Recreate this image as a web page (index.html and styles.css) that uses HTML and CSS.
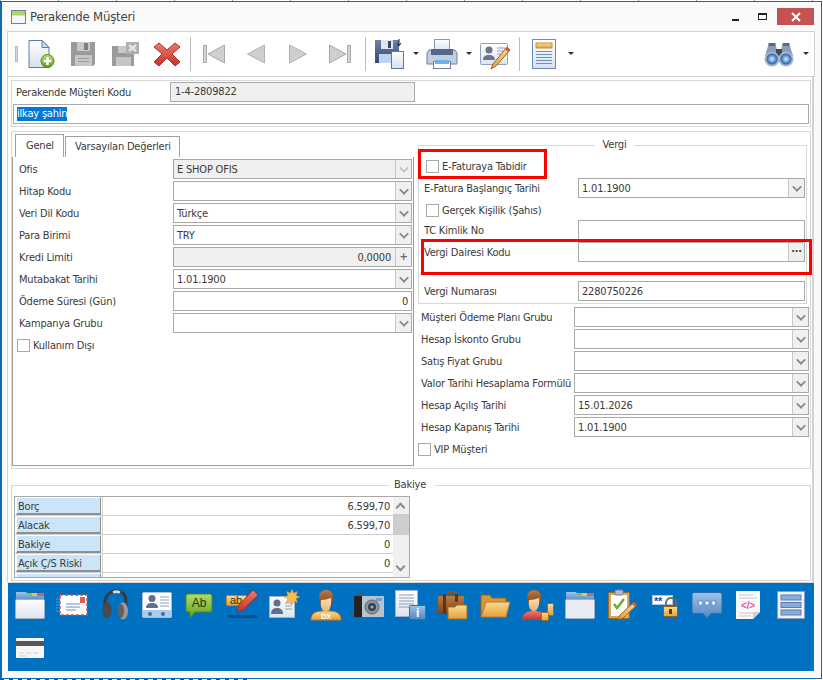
FILE: index.html
```html
<!DOCTYPE html>
<html lang="tr">
<head>
    <meta charset="UTF-8">
    <title>Perakende Müşteri</title>
    <link rel="stylesheet" href="styles.css">
</head>
<body>
    <svg class="defs" width="0" height="0">
        <defs>
            <linearGradient id="gPage" x1="0" y1="0" x2="0" y2="1"><stop offset="0" stop-color="#ffffff"/><stop offset="1" stop-color="#d5e0f0"/></linearGradient>
            <linearGradient id="gGreen" x1="0" y1="0" x2="0" y2="1"><stop offset="0" stop-color="#b5dc6a"/><stop offset="1" stop-color="#5f9e22"/></linearGradient>
            <linearGradient id="gRed" x1="0" y1="0" x2="0" y2="1"><stop offset="0" stop-color="#ee7a6c"/><stop offset="1" stop-color="#c4332a"/></linearGradient>
            <linearGradient id="gBlue" x1="0" y1="0" x2="0" y2="1"><stop offset="0" stop-color="#9cc2ea"/><stop offset="1" stop-color="#5587c2"/></linearGradient>
            <linearGradient id="gNavy" x1="0" y1="0" x2="0" y2="1"><stop offset="0" stop-color="#6c82a8"/><stop offset="1" stop-color="#34486e"/></linearGradient>
            <linearGradient id="gOrange" x1="0" y1="0" x2="0" y2="1"><stop offset="0" stop-color="#fbdc93"/><stop offset="1" stop-color="#e3a03c"/></linearGradient>
            <linearGradient id="gBrown" x1="0" y1="0" x2="0" y2="1"><stop offset="0" stop-color="#b97a45"/><stop offset="1" stop-color="#7a4318"/></linearGradient>
            <linearGradient id="gSkin" x1="0" y1="0" x2="0" y2="1"><stop offset="0" stop-color="#fde0b4"/><stop offset="1" stop-color="#eeb06c"/></linearGradient>
            <linearGradient id="gCard" x1="0" y1="0" x2="0" y2="1"><stop offset="0" stop-color="#ffffff"/><stop offset="1" stop-color="#dde3ee"/></linearGradient>
            <radialGradient id="gLens"><stop offset="0" stop-color="#dcecff"/><stop offset="0.55" stop-color="#6c9fe0"/><stop offset="1" stop-color="#2d5a9c"/></radialGradient>
        </defs>
    </svg>

    <div class="window">
        <div class="titlebar">
            <svg class="title-icon" width="15" height="14" viewBox="0 0 15 14"><rect x="0.5" y="0.5" width="14" height="13" fill="#f4f6fb" stroke="#6f7fa6"/><rect x="1" y="1" width="13" height="4.5" fill="#b3d465"/></svg>
            <span class="title-text">Perakende Müşteri</span>
            <div class="win-controls">
                <span class="win-min"></span>
                <span class="win-max"></span>
                <span class="win-close">
                    <svg width="10" height="10" viewBox="0 0 10 10"><path d="M1 1l8 8M9 1l-8 8" stroke="#fff" stroke-width="2"/></svg>
                </span>
            </div>
        </div>

        <div class="toolbar">
            <span class="grip"></span>
            <span class="tb-btn"><svg width="32" height="32" viewBox="0 0 32 32"><path d="M4 2.500h13l7 7v20H4z" fill="url(#gPage)" stroke="#5b7aa8"/><path d="M17 2.500v7h7z" fill="#cfdcee" stroke="#5b7aa8"/><circle cx="22.500" cy="23" r="6.500" fill="url(#gGreen)" stroke="#4d8a1e"/><path d="M22.500 19v8M18.500 23h8" stroke="#fff" stroke-width="2.400"/></svg></span>
            <span class="tb-btn"><svg width="32" height="32" viewBox="0 0 32 32"><path d="M4 4h24v22l-2 2H4z" fill="#9b9b9b"/><rect x="10" y="4" width="13" height="9" fill="#c9c9c9"/><rect x="17" y="5" width="4" height="7" fill="#7e7e7e"/><rect x="8" y="17" width="17" height="11" fill="#c6c6c6"/><path d="M11 20.500h11M11 23.500h11" stroke="#9b9b9b"/></svg></span>
            <span class="tb-btn"><svg width="32" height="32" viewBox="0 0 32 32"><path d="M3 8h22v20H3z" fill="#9b9b9b"/><rect x="9" y="8" width="10" height="7" fill="#c9c9c9"/><rect x="7" y="19" width="15" height="9" fill="#c6c6c6"/><rect x="17" y="4" width="13" height="12" fill="#b0b0b0"/><path d="M20 7l7 6M27 7l-7 6" stroke="#e4e4e4" stroke-width="2.400"/></svg></span>
            <span class="tb-btn"><svg width="32" height="32" viewBox="0 0 32 32"><path d="M8 5l8 7 8-7 5 4-8 7 8 8-5 4-8-8-8 8-5-4 8-8-8-7z" fill="url(#gRed)" stroke="#a83228"/></svg></span>
            <span class="tb-sep"></span>
            <span class="tb-btn"><svg width="32" height="32" viewBox="0 0 32 32"><rect x="5.500" y="7.500" width="3" height="17" fill="#d4d4d4" stroke="#a8a8a8"/><path d="M26.500 7v18L10 16z" fill="#cfcfcf" stroke="#a8a8a8"/></svg></span>
            <span class="tb-btn"><svg width="32" height="32" viewBox="0 0 32 32"><path d="M24.500 7v18L7.500 16z" fill="#cfcfcf" stroke="#b0b0b0"/></svg></span>
            <span class="tb-btn"><svg width="32" height="32" viewBox="0 0 32 32"><path d="M7.500 7v18l17-9z" fill="#cfcfcf" stroke="#b0b0b0"/></svg></span>
            <span class="tb-btn"><svg width="32" height="32" viewBox="0 0 32 32"><path d="M5.500 7v18L22 16z" fill="#cfcfcf" stroke="#a8a8a8"/><rect x="23.500" y="7.500" width="3" height="17" fill="#d4d4d4" stroke="#a8a8a8"/></svg></span>
            <span class="tb-sep tb-sep-b"></span>
            <span class="tb-btn"><svg width="32" height="32" viewBox="0 0 32 32"><path d="M2 2h24v23H2z" fill="url(#gNavy)"/><rect x="8" y="2" width="12" height="9" fill="#dfe6f1"/><rect x="15" y="3" width="3" height="7" fill="#34486e"/><rect x="6" y="16" width="16" height="9" fill="#bcd4ee"/><rect x="18.500" y="13.500" width="12" height="17" fill="url(#gPage)" stroke="#5b7aa8"/><path d="M26 1v6M24 5l2 3 2-3" fill="none" stroke="#222"/></svg></span>
            <span class="tb-drop"></span>
            <span class="tb-btn"><svg width="32" height="32" viewBox="0 0 32 32"><rect x="8.500" y="1.500" width="15" height="11" fill="url(#gCard)" stroke="#8a9ab5"/><path d="M3 12h26l2 3v11H1V15z" fill="#c3cee0" stroke="#6f80a0"/><rect x="5" y="11" width="22" height="6" fill="#56688a"/><rect x="7.500" y="23.500" width="17" height="7" fill="#fff" stroke="#6f80a0"/><rect x="9" y="22" width="14" height="4" fill="#6fb2e8"/></svg></span>
            <span class="tb-drop"></span>
            <span class="tb-btn"><svg width="32" height="32" viewBox="0 0 32 32"><rect x="1.500" y="5.500" width="27" height="21" rx="1" fill="url(#gCard)" stroke="#8fa2c0"/><circle cx="10" cy="12" r="3.500" fill="#68758d"/><path d="M4 22c0-4 3-5 6-5s6 1 6 5z" fill="#68758d"/><path d="M18 10h8M18 13h6M18 16h4" stroke="#8fa2c0"/><path d="M28 9l3 3-14 16-5 3 2-5z" fill="url(#gOrange)" stroke="#99611c"/><path d="M28 9l3 3-2 2-3-3z" fill="#d9534a"/></svg></span>
            <span class="tb-sep tb-sep-c"></span>
            <span class="tb-btn"><svg width="32" height="32" viewBox="0 0 32 32"><rect x="4.500" y="1.500" width="23" height="29" fill="url(#gPage)" stroke="#6b8ab8"/><rect x="8" y="5" width="16" height="5" fill="url(#gOrange)" stroke="#c88f2e"/><path d="M8 13.500h16M8 16.500h16M8 19.500h16M8 22.500h16M8 25.500h16" stroke="#6f8dbd"/></svg></span>
            <span class="tb-drop"></span>
            <span class="tb-btn tb-right"><svg width="32" height="32" viewBox="0 0 32 32"><path d="M5 8c1-3 7-3 8 0l2 10H2z" fill="#8a9bb5"/><path d="M19 8c1-3 7-3 8 0l3 10H17z" fill="#8a9bb5"/><path d="M5.500 5h7v3h-7zM19.500 5h7v3h-7z" fill="#5b6a80"/><rect x="13" y="11" width="6" height="8" fill="#3f4a5c"/><circle cx="9" cy="21" r="7.500" fill="#a5b4ca"/><circle cx="23" cy="21" r="7.500" fill="#a5b4ca"/><circle cx="9" cy="21" r="5.500" fill="url(#gLens)"/><circle cx="23" cy="21" r="5.500" fill="url(#gLens)"/></svg></span>
            <span class="tb-drop"></span>
        </div>

        <div class="main">
            <div class="code-box">
                <div class="code-row">
                    <label class="lbl">Perakende Müşteri Kodu</label>
                    <div class="inp inp-code disabled">1-4-2809822</div>
                </div>
                <div class="inp inp-name"><span class="selected">ilkay şahin</span></div>
            </div>

            <div class="detail-box">
                <div class="tabs-col">
                    <div class="tabs">
                        <span class="tab active">Genel</span>
                        <span class="tab">Varsayılan Değerleri</span>
                    </div>
                    <div class="tab-panel">
                        <div class="row"><label class="lbl">Ofis</label><div class="inp disabled"><span class="val">E SHOP OFIS</span><span class="drop off"></span></div></div>
                        <div class="row"><label class="lbl">Hitap Kodu</label><div class="inp"><span class="val"></span><span class="drop"></span></div></div>
                        <div class="row"><label class="lbl">Veri Dil Kodu</label><div class="inp"><span class="val">Türkçe</span><span class="drop"></span></div></div>
                        <div class="row"><label class="lbl">Para Birimi</label><div class="inp"><span class="val">TRY</span><span class="drop"></span></div></div>
                        <div class="row"><label class="lbl">Kredi Limiti</label><div class="inp disabled"><span class="val num">0,0000</span><span class="btn-side">+</span></div></div>
                        <div class="row"><label class="lbl">Mutabakat Tarihi</label><div class="inp"><span class="val">1.01.1900</span><span class="drop"></span></div></div>
                        <div class="row"><label class="lbl">Ödeme Süresi (Gün)</label><div class="inp"><span class="val num pad">0</span></div></div>
                        <div class="row"><label class="lbl">Kampanya Grubu</label><div class="inp"><span class="val"></span><span class="drop"></span></div></div>
                        <div class="check-row check-left"><span class="chk"></span>Kullanım Dışı</div>
                    </div>
                </div>

                <div class="right-col">
                    <fieldset class="group vergi">
                        <legend>Vergi</legend>
                        <div class="check-row"><span class="chk"></span>E-Faturaya Tabidir</div>
                        <div class="row"><label class="lbl">E-Fatura Başlangıç Tarihi</label><div class="inp"><span class="val">1.01.1900</span><span class="drop"></span></div></div>
                        <div class="check-row"><span class="chk"></span>Gerçek Kişilik (Şahıs)</div>
                        <div class="row"><label class="lbl">TC Kimlik No</label><div class="inp"><span class="val"></span></div></div>
                        <div class="row row-tax"><label class="lbl">Vergi Dairesi Kodu</label><div class="inp"><span class="val"></span><span class="btn-side dots">...</span></div></div>
                        <div class="row"><label class="lbl">Vergi Numarası</label><div class="inp"><span class="val">2280750226</span></div></div>
                    </fieldset>
                    <div class="lower">
                        <div class="row"><label class="lbl">Müşteri Ödeme Planı Grubu</label><div class="inp"><span class="val"></span><span class="drop"></span></div></div>
                        <div class="row"><label class="lbl">Hesap İskonto Grubu</label><div class="inp"><span class="val"></span><span class="drop"></span></div></div>
                        <div class="row"><label class="lbl">Satış Fiyat Grubu</label><div class="inp"><span class="val"></span><span class="drop"></span></div></div>
                        <div class="row"><label class="lbl">Valor Tarihi Hesaplama Formülü</label><div class="inp"><span class="val"></span><span class="drop"></span></div></div>
                        <div class="row"><label class="lbl">Hesap Açılış Tarihi</label><div class="inp"><span class="val">15.01.2026</span><span class="drop"></span></div></div>
                        <div class="row"><label class="lbl">Hesap Kapanış Tarihi</label><div class="inp"><span class="val">1.01.1900</span><span class="drop"></span></div></div>
                        <div class="check-row check-vip"><span class="chk"></span>VIP Müşteri</div>
                    </div>
                </div>
            </div>

            <fieldset class="group bakiye">
                <legend>Bakiye</legend>
                <div class="grid">
                    <div class="grid-rows">
                        <div class="grid-row"><span class="grid-head">Borç</span><span class="grid-val">6.599,70</span></div>
                        <div class="grid-row"><span class="grid-head">Alacak</span><span class="grid-val">6.599,70</span></div>
                        <div class="grid-row"><span class="grid-head">Bakiye</span><span class="grid-val">0</span></div>
                        <div class="grid-row"><span class="grid-head">Açık Ç/S Riski</span><span class="grid-val">0</span></div>
                        <div class="grid-row"><span class="grid-head"></span><span class="grid-val"></span></div>
                    </div>
                    <div class="scrollbar">
                        <span class="sb-btn sb-up"></span>
                        <span class="sb-thumb"></span>
                        <span class="sb-btn sb-down"></span>
                    </div>
                </div>
            </fieldset>
        </div>

        <div class="launcher">
            <span class="app"><svg width="32" height="32" viewBox="0 0 32 32"><path d="M2 3h10l2 3h16v6H2z" fill="url(#gBlue)"/><rect x="13" y="4" width="5" height="3" fill="#8fc04a"/><rect x="18" y="4" width="5" height="3" fill="#e6c34a"/><rect x="23" y="4" width="7" height="3" fill="#d8606a"/><rect x="1.500" y="10.500" width="29" height="19" rx="1" fill="url(#gCard)" stroke="#9fb2cc"/></svg></span>
            <span class="app"><svg width="32" height="32" viewBox="0 0 32 32"><path d="M0 10h5M0 13h5M0 16h5M0 19h5M0 22h5" stroke="#4f93d8"/><rect x="4" y="6" width="27" height="20" fill="#fff" stroke="#c9534f" stroke-dasharray="3 2" stroke-width="1.500"/><rect x="24" y="8" width="5" height="6" fill="#e0605a"/><path d="M10 15h14M10 18h14M10 21h10" stroke="#6f8dbd"/></svg></span>
            <span class="app"><svg width="32" height="32" viewBox="0 0 32 32"><path d="M6 20C4 6 12 2 18 2c7 0 10 6 9 16" fill="none" stroke="#3a3a3a" stroke-width="3"/><path d="M14 3.500c2-1 5-1 7 0" stroke="#d8d8d8" stroke-width="2.500" fill="none"/><ellipse cx="8" cy="21" rx="4.500" ry="8" fill="#4a4a4a"/><ellipse cx="24" cy="22" rx="5" ry="8.500" fill="#9a9a9a"/><ellipse cx="22" cy="22" rx="3" ry="7" fill="#606060"/></svg></span>
            <span class="app"><svg width="32" height="32" viewBox="0 0 32 32"><rect x="1.500" y="3.500" width="29" height="25" rx="1" fill="#fff" stroke="#a9bdd6"/><rect x="2" y="21" width="28" height="7" fill="#a9ccee"/><circle cx="9" cy="25" r="2" fill="#4a6a9c"/><circle cx="22" cy="25" r="2" fill="#4a6a9c"/><circle cx="11" cy="9.500" r="3.500" fill="#5e7090"/><path d="M5 19c0-4 3-5 6-5s6 1 6 5z" fill="#5e7090"/><path d="M19 8h9M19 11h9M19 14h9M19 17h9" stroke="#8a9cb8"/></svg></span>
            <span class="app"><svg width="32" height="32" viewBox="0 0 32 32"><path d="M5 5h22a2 2 0 0 1 2 2v14a2 2 0 0 1-2 2H12l-5 6v-6H5a2 2 0 0 1-2-2V7a2 2 0 0 1 2-2z" fill="url(#gGreen)" stroke="#4d8a1e"/><text class="ico-text" x="16" y="18" text-anchor="middle" font-size="12" fill="#1f3a10">Ab</text></svg></span>
            <span class="app"><svg width="34" height="32" viewBox="0 0 34 32"><rect x="1.500" y="6.500" width="20" height="10" rx="1" fill="url(#gOrange)" stroke="#b88a3a"/><text class="ico-text" x="11" y="15" text-anchor="middle" font-size="11" fill="#3a2a10">ab</text><path d="M28 1l5 5-15 15-6 2 2-7z" fill="url(#gRed)" stroke="#9c2f2a"/><rect x="3" y="26" width="29" height="3" rx="1" fill="#0d4f8a"/></svg></span>
            <span class="app"><svg width="32" height="32" viewBox="0 0 32 32"><rect x="1.500" y="7.500" width="25" height="21" fill="url(#gCard)" stroke="#9fb2cc"/><circle cx="9" cy="14" r="3.500" fill="#5e7090"/><path d="M3 25c0-5 3-6 6-6s6 1 6 6z" fill="#5e7090"/><path d="M17 14h7M17 17h7M17 20h7" stroke="#8a9cb8"/><path d="M24 0l1.500 4 4-1.500-1.500 4 4 1.500-4 1.500 1.500 4-4-1.500L24 16l-1.500-4-4 1.500 1.500-4-4-1.500 4-1.500-1.500-4 4 1.500z" fill="#f4bd56" stroke="#cf8a2a" stroke-width="0.500"/></svg></span>
            <span class="app"><svg width="32" height="32" viewBox="0 0 32 32"><path d="M1 31c0-8 6-9 15-9s15 1 15 9z" fill="url(#gOrange)" stroke="#c87a20"/><path d="M9 9c0-6 3-8 7-8s8 2 7 9l-1 6H10z" fill="url(#gBrown)"/><path d="M11 11c3 0 7-1 10-2 1 6-1 14-5 14s-6-6-5-12z" fill="url(#gSkin)"/><text class="ico-text ico-bold" x="16" y="30" text-anchor="middle" font-size="7" fill="#fff">DX</text></svg></span>
            <span class="app"><svg width="32" height="32" viewBox="0 0 32 32"><rect x="1" y="7" width="30" height="21" rx="1" fill="#b9c3cf"/><rect x="1" y="7" width="8" height="21" fill="#222"/><rect x="4" y="4" width="7" height="3" fill="#555"/><circle cx="19" cy="18" r="7" fill="#8a94a0" stroke="#5c6670"/><circle cx="19" cy="18" r="4" fill="#39424c"/><circle cx="19" cy="18" r="1.500" fill="#8fb4de"/><rect x="23" y="9" width="6" height="3" fill="#6c9fe0"/></svg></span>
            <span class="app"><svg width="32" height="32" viewBox="0 0 32 32"><rect x="0.500" y="1.500" width="22" height="26" fill="url(#gCard)" stroke="#9fb2cc"/><path d="M4 6h15M4 9h15M4 12h15M4 15h15M4 18h10" stroke="#8a9cb8"/><rect x="14.500" y="16.500" width="16" height="14" rx="1" fill="url(#gBlue)" stroke="#3d6ca8"/><text class="ico-text ico-bold" x="22.500" y="28" text-anchor="middle" font-size="12" fill="#fff">i</text></svg></span>
            <span class="app"><svg width="32" height="32" viewBox="0 0 32 32"><path d="M11 7V3h9v4" fill="none" stroke="#8a5426" stroke-width="2"/><rect x="1" y="7" width="26" height="18" rx="1" fill="url(#gBrown)"/><rect x="6" y="5" width="3" height="20" fill="#60340f"/><rect x="18" y="5" width="3" height="8" fill="#60340f"/><path d="M11 18h7l2-2h10v14H11z" fill="url(#gOrange)" stroke="#a86a1c"/></svg></span>
            <span class="app"><svg width="32" height="32" viewBox="0 0 32 32"><path d="M2 28V6h9l2 3h14v19z" fill="#d9973c" stroke="#9a6018"/><path d="M2 28l5-15h24l-4 15z" fill="url(#gOrange)" stroke="#b27a24"/></svg></span>
            <span class="app"><svg width="34" height="32" viewBox="0 0 34 32"><path d="M1 31c0-7 5-9 12-9s12 2 12 9z" fill="url(#gRed)"/><path d="M6 9c0-6 3-8 7-8s8 3 7 9l-1 5H7z" fill="url(#gBrown)"/><path d="M8 11c3 0 7-1 10-2 1 6-1 13-5 13s-6-5-5-11z" fill="url(#gSkin)"/><rect x="26.500" y="14.500" width="6" height="12" rx="1" fill="url(#gOrange)" stroke="#a86a1c"/><rect x="20.500" y="23.500" width="7" height="8" rx="1" fill="url(#gOrange)" stroke="#a86a1c"/></svg></span>
            <span class="app"><svg width="32" height="32" viewBox="0 0 32 32"><path d="M2 3h10l2 3h16v6H2z" fill="url(#gBlue)"/><rect x="13" y="4" width="5" height="3" fill="#8fc04a"/><rect x="18" y="4" width="5" height="3" fill="#e6c34a"/><rect x="23" y="4" width="7" height="3" fill="#d8606a"/><rect x="1.500" y="10.500" width="29" height="19" rx="1" fill="#e8edf5" stroke="#9fb2cc"/></svg></span>
            <span class="app"><svg width="32" height="32" viewBox="0 0 32 32"><rect x="2.500" y="3.500" width="21" height="26" rx="1" fill="#d9a765" stroke="#9a6a28"/><rect x="5" y="6" width="16" height="21" fill="#fff"/><rect x="9" y="1" width="8" height="5" rx="1" fill="#b4bcc8" stroke="#75808e"/><path d="M8 15l3 4 7-9" fill="none" stroke="#69ad2d" stroke-width="2.500"/><path d="M28 13l3 3-14 13-5 2 2-5z" fill="url(#gOrange)" stroke="#99611c"/><path d="M28 13l3 3-2 2-3-3z" fill="#d9534a"/></svg></span>
            <span class="app"><svg width="26" height="32" viewBox="0 0 26 32"><rect x="0.500" y="6.500" width="20" height="9" fill="#fff" stroke="#b5c4d8"/><text class="ico-text ico-bold" x="2" y="16" font-size="11" fill="#1a4d9e">**</text><path d="M14 17v-3a5 5 0 0 1 10 0v3" fill="none" stroke="#6a6a6a" stroke-width="2"/><rect x="11.500" y="17.500" width="14" height="10" rx="1" fill="url(#gOrange)" stroke="#8f611c"/><rect x="17" y="20" width="3" height="5" fill="#5c3c10"/></svg></span>
            <span class="app"><svg width="32" height="32" viewBox="0 0 32 32"><path d="M3 3.500h26a2 2 0 0 1 2 2v17a2 2 0 0 1-2 2H20l-4 5-4-5H3a2 2 0 0 1-2-2v-17a2 2 0 0 1 2-2z" fill="url(#gBlue)" stroke="#2f6aa8"/><circle cx="9.500" cy="14" r="2.500" fill="#dde8f5" stroke="#3d6ca8" stroke-width="0.700"/><circle cx="16" cy="14" r="2.500" fill="#dde8f5" stroke="#3d6ca8" stroke-width="0.700"/><circle cx="22.500" cy="14" r="2.500" fill="#dde8f5" stroke="#3d6ca8" stroke-width="0.700"/></svg></span>
            <span class="app"><svg width="32" height="32" viewBox="0 0 32 32"><path d="M3 2h24v21l-7 7H3z" fill="#fafafa"/><path d="M27 23h-7v7z" fill="#cfcfcf"/><path d="M6 6h14M6 9h18M20 24H6M18 27H6" stroke="#c8c8c8"/><text class="ico-text ico-bold" x="15" y="20" text-anchor="middle" font-size="10" fill="#e8579a">&lt;/&gt;</text></svg></span>
            <span class="app"><svg width="32" height="32" viewBox="0 0 32 32"><rect x="2.500" y="2.500" width="27" height="27" fill="#f0f4fa" stroke="#8a9cc0"/><rect x="6" y="6" width="20" height="5" fill="#86aedd" stroke="#5a7eae"/><rect x="6" y="13.500" width="20" height="5" fill="#86aedd" stroke="#5a7eae"/><rect x="6" y="21" width="20" height="5" fill="#86aedd" stroke="#5a7eae"/></svg></span>
            <span class="app"><svg width="32" height="32" viewBox="0 0 32 32"><rect x="2" y="5" width="28" height="20" rx="1" fill="#f6f6f6"/><rect x="2" y="8" width="28" height="5" fill="#555"/><path d="M5 20h5M12 20h5M19 20h5M5 23h7" stroke="#d0d0d0"/></svg></span>
        </div>

        <div class="mark mark-efatura"></div>
        <div class="mark mark-vergi"></div>
    </div>
</body>
</html>
```

FILE: styles.css
```css
* {
    margin: 0;
    padding: 0;
    box-sizing: border-box;
}
html, body {
    width: 823px;
    height: 680px;
    overflow: hidden;
}
body {
    background-color: #fff;
    /* bits of the application behind the window, top and bottom edge */
    background-image:
        repeating-linear-gradient(90deg, #999 0 1px, #fff 1px 58px),
        repeating-linear-gradient(90deg, #444 0 4px, #fff 4px 9px);
    background-size: 823px 1px, 250px 1px;
    background-position: 0 0, 0 679px;
    background-repeat: no-repeat;
    font-family: "DejaVu Sans Condensed", "DejaVu Sans", sans-serif;
    font-size: 11px;
    letter-spacing: -0.2px;
    color: #3a3a3a;
    padding-top: 1px;
}
.defs {
    position: absolute;
}
.window {
    position: relative;
    width: 822px;
    height: 678px;
    background-color: #fafafa;
    border: 1px solid #0a6cb8;
    border-left-width: 2px;
}

/* title bar */
.titlebar {
    height: 29px;
    display: flex;
    align-items: center;
    padding-left: 9px;
}
.title-text {
    margin-left: 4px;
    font-size: 13px;
    color: #444;
}
.win-controls {
    margin-left: auto;
    margin-right: 7px;
    display: flex;
    align-items: center;
}
.win-min {
    width: 7px;
    height: 2px;
    margin-top: 6px;
    background-color: #222;
}
.win-max {
    width: 9px;
    height: 7px;
    margin-left: 19px;
    border: 1px solid #222;
    border-top-width: 2px;
}
.win-close {
    width: 37px;
    height: 17px;
    margin-left: 10px;
    background-color: #c75050;
    display: flex;
    align-items: center;
    justify-content: center;
}

/* toolbar */
.toolbar {
    height: 46px;
    margin: 0 6px 0 5px;
    padding: 0 3px 0 7px;
    display: flex;
    align-items: center;
    background-color: #fff;
    border: 1px solid #d2d2d2;
}
.grip {
    width: 3px;
    height: 16px;
    margin-right: 2px;
    background-color: #d8d8d8;
    border: 1px solid #b8b8b8;
}
.tb-btn {
    width: 42px;
    display: flex;
    justify-content: center;
}
.tb-sep {
    width: 1px;
    height: 34px;
    margin: 0 2px 0 2px;
    background-color: #bdbdbd;
}
.tb-sep-b {
    margin-left: 4px;
    margin-right: 2px;
}
.tb-sep-c {
    margin-left: 3px;
    margin-right: 3px;
}
.tb-drop {
    width: 11px;
    height: 6px;
    position: relative;
}
.tb-drop::after {
    content: "";
    position: absolute;
    left: 3px;
    top: 1px;
    border-left: 3px solid transparent;
    border-right: 3px solid transparent;
    border-top: 3px solid #333;
}
.tb-right {
    margin-left: auto;
}

/* main area */
.main {
    height: 506px;
    margin: 0 7px 0 5px;
    padding: 3px 0 0 3px;
    background-color: #fff;
    border-left: 1px solid #d2d2d2;
    border-right: 2px solid #d2d2d2;
    border-bottom: 1px solid #d2d2d2;
}
.code-box {
    width: 800px;
    height: 47px;
    padding: 1px 0 0 1px;
    border: 1px solid #d8d8d8;
}
.code-row {
    height: 20px;
    display: flex;
    align-items: center;
    margin-bottom: 2px;
    padding-left: 3px;
}
.lbl {
    flex: none;
    width: 154px;
    white-space: nowrap;
}
.inp {
    flex: 1;
    height: 20px;
    display: flex;
    align-items: stretch;
    background-color: #fff;
    border: 1px solid #a9a9a9;
    white-space: nowrap;
}
.inp.disabled {
    background-color: #f0f0f0;
}
.inp-code {
    flex: none;
    width: 245px;
    line-height: 18px;
    padding-left: 4px;
}
.inp-name {
    width: 796px;
    line-height: 18px;
    padding-left: 3px;
}
.selected {
    align-self: center;
    line-height: 14px;
    background-color: #0078d7;
    color: #fff;
}
.val {
    flex: 1;
    line-height: 19px;
    padding-left: 3px;
}
.val.num {
    text-align: right;
    padding-right: 4px;
}
.val.pad {
    padding-right: 3px;
}
.drop, .btn-side {
    flex: none;
    width: 16px;
    position: relative;
    background-color: #f0f0f0;
    border-left: 1px solid #c8c8c8;
}
.drop::after {
    content: "";
    position: absolute;
    left: 4px;
    top: 4px;
    width: 6px;
    height: 6px;
    border-right: 2px solid #7d8893;
    border-bottom: 2px solid #7d8893;
    transform: rotate(45deg) scale(0.85);
}
.drop.off::after {
    border-color: #c0c0c0;
}
.btn-side {
    text-align: center;
    line-height: 17px;
    font-weight: bold;
    color: #666;
}
.dots {
    line-height: 12px;
    color: #444;
}

.detail-box {
    width: 800px;
    height: 338px;
    margin-top: 4px;
    display: flex;
    border: 1px solid #d8d8d8;
}
.tabs-col {
    flex: none;
    width: 402px;
    padding-top: 2px;
}
.tabs {
    height: 23px;
    display: flex;
    align-items: flex-end;
    padding-left: 3px;
}
.tab {
    height: 21px;
    width: 115px;
    padding: 0 9px;
    line-height: 20px;
    border: 1px solid #a0a0a0;
    border-bottom: 0;
    margin-left: 1px;
    background-color: #fff;
    white-space: nowrap;
}
.tab.active {
    height: 23px;
    width: 49px;
    margin-left: 0;
    padding: 0 10px;
    line-height: 21px;
}
.tab-panel {
    height: 309px;
    padding: 2px 1px 0 6px;
    border: 1px solid #9c9c9c;
    border-top: 0;
}
.row {
    height: 20px;
    display: flex;
    align-items: center;
    margin-bottom: 2px;
}
.check-row {
    height: 20px;
    display: flex;
    align-items: center;
    white-space: nowrap;
}
.chk {
    width: 13px;
    height: 13px;
    margin-right: 3px;
    background-color: #fff;
    border: 1px solid #a9a9a9;
}
.check-left {
    margin-left: -2px;
}

.right-col {
    flex: none;
    width: 392px;
    margin-left: 4px;
}
.group {
    border: 1px solid #d8d8d8;
    border-radius: 0;
}
.group legend {
    margin: 0 auto;
    padding: 0 8px;
    height: 12px;
    line-height: 12px;
}
.vergi {
    width: 389px;
    height: 165px;
    margin-top: 7px;
    padding: 5px 1px 0 5px;
}
.vergi .check-row {
    padding-left: 2px;
    margin-bottom: 2px;
}
.vergi .row + .check-row {
    margin-bottom: 0;
}
.row-tax {
    margin-bottom: 19px;
}
.lower {
    padding-top: 3px;
    padding-left: 3px;
    margin-right: 1px;
}
.lower .lbl {
    width: 153px;
}
.check-vip {
    margin-left: -3px;
    margin-top: 1px;
}

/* balance */
.bakiye {
    width: 800px;
    height: 102px;
    margin-top: 10px;
    padding: 5px 0 0 2px;
}
.bakiye legend {
    padding: 0 9px 0 5px;
}
.grid {
    width: 396px;
    height: 82px;
    display: flex;
    overflow: hidden;
    border: 1px solid #a9a9a9;
}
.grid-rows {
    flex: 1;
    height: 100%;
    overflow: hidden;
}
.grid-row {
    height: 19px;
    display: flex;
    border-bottom: 1px solid #d0d0d0;
}
.grid-head {
    width: 85px;
    margin-left: 1px;
    padding-left: 1px;
    line-height: 17px;
    background-color: #cce4f7;
    border: 1px solid #fff;
    border-right: 1px solid #8f8f8f;
    border-bottom: 2px solid #8f8f8f;
}
.grid-val {
    flex: 1;
    margin-left: 1px;
    text-align: right;
    padding-right: 3px;
    line-height: 19px;
    border-left: 1px solid #d0d0d0;
}
.scrollbar {
    width: 16px;
    display: flex;
    flex-direction: column;
    background-color: #f0f0f0;
}
.sb-btn {
    height: 17px;
    position: relative;
}
.sb-btn::after {
    content: "";
    position: absolute;
    left: 4px;
    width: 5px;
    height: 5px;
    border-right: 2px solid #8a8a8a;
    border-bottom: 2px solid #8a8a8a;
}
.sb-up::after {
    top: 7px;
    transform: rotate(225deg);
}
.sb-down::after {
    top: 3px;
    transform: rotate(45deg);
}
.sb-thumb {
    height: 21px;
    margin-bottom: auto;
    background-color: #cdcdcd;
}

/* blue launcher */
.launcher {
    width: 806px;
    height: 88px;
    margin: 0 0 0 6px;
    padding-left: 1px;
    display: flex;
    flex-wrap: wrap;
    align-content: flex-start;
    background-color: #0070c0;
}
.app {
    width: 42.3px;
    height: 44px;
    display: flex;
    align-items: center;
    justify-content: center;
}
.ico-text {
    font-family: "Liberation Sans", sans-serif;
}
.ico-bold {
    font-weight: bold;
}

/* red annotation boxes over the form */
.mark {
    position: absolute;
    border: 3px solid #f00;
}
.mark-efatura {
    left: 416px;
    top: 147px;
    width: 129px;
    height: 30px;
}
.mark-vergi {
    left: 419px;
    top: 237px;
    width: 391px;
    height: 36px;
}
```
